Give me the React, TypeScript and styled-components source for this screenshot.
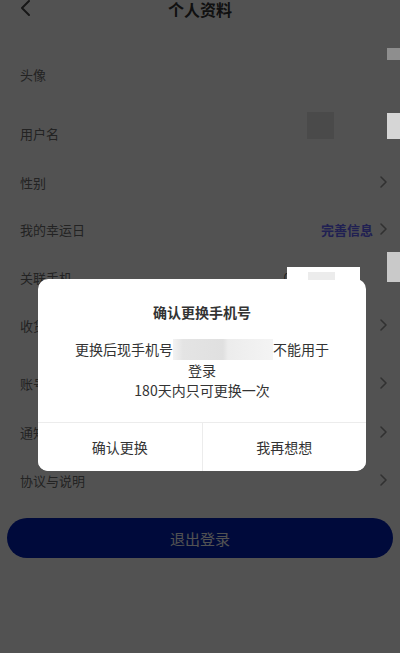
import React from "react";
import styled, { createGlobalStyle } from "styled-components";

const GlobalStyle = createGlobalStyle`
  html, body { margin: 0; padding: 0; background: #525252; }
  body { font-family: "Noto Sans CJK SC", "Noto Sans", sans-serif; }
  * { box-sizing: border-box; }
`;

const Screen = styled.div`
  position: relative;
  width: 400px;
  height: 653px;
  overflow: hidden;
`;

const Page = styled.div`
  display: flex;
  flex-direction: column;
  background: #ffffff;
  height: 653px;
`;

const Header = styled.div`
  position: relative;
  height: 18px;
  display: flex;
  align-items: center;
  justify-content: center;
`;

const BackButton = styled.div`
  position: absolute;
  left: 20px;
  top: 0;
  width: 12px;
  height: 16px;
  display: flex;
  align-items: center;
`;

const Title = styled.div`
  font-size: 16px;
  line-height: 18px;
  font-weight: 700;
  color: #333333;
`;

const List = styled.div`
  display: flex;
  flex-direction: column;
  margin-top: 22px;
`;

const Group = styled.div<{ $gap?: number }>`
  display: flex;
  flex-direction: column;
  margin-top: ${(p) => p.$gap ?? 0}px;
`;

const Row = styled.div<{ $h: number }>`
  height: ${(p) => p.$h}px;
  display: flex;
  align-items: center;
  justify-content: space-between;
  padding: 0 13px 0 20px;
`;

const Label = styled.span`
  font-size: 13px;
  color: #6c6c6c;
`;

const Right = styled.div`
  display: flex;
  align-items: center;
  gap: 7px;
`;

const LinkText = styled.span`
  font-size: 13px;
  font-weight: 700;
  color: #6464ff;
`;

const Value = styled.span`
  font-size: 13px;
  color: #6c6c6c;
  margin-right: 36px;
`;

const Logout = styled.button`
  margin: 14px 7px 0;
  height: 40px;
  border: none;
  border-radius: 20px;
  background: #001fb6;
  color: #ffffff;
  font-family: inherit;
  font-size: 15px;
  display: flex;
  align-items: center;
  justify-content: center;
`;

const Overlay = styled.div`
  position: absolute;
  inset: 0;
  background: rgba(0, 0, 0, 0.68);
  display: flex;
  justify-content: flex-start;
  align-items: flex-start;
  padding: 279px 0 0 38px;
`;

const Dialog = styled.div`
  width: 328px;
  background: #ffffff;
  border-radius: 10px;
  display: flex;
  flex-direction: column;
  overflow: hidden;
`;

const DialogTitle = styled.div`
  padding-top: 23px;
  font-size: 14px;
  line-height: 20px;
  font-weight: 700;
  color: #333333;
  text-align: center;
`;

const DialogBody = styled.div`
  margin-top: 17px;
  padding: 0 16px 22px;
  font-size: 14px;
  line-height: 20px;
  color: #333333;
  text-align: center;
`;

const Blurred = styled.span`
  display: inline-block;
  width: 100px;
  height: 21px;
  vertical-align: middle;
  margin-top: -3px;
  background: linear-gradient(
    90deg,
    #f2f2f2 0%,
    #e4e4e4 10%,
    #e0e0e0 50%,
    #ececec 55%,
    #f4f4f4 100%
  );
`;

const Actions = styled.div`
  display: flex;
  border-top: 1px solid #ececec;
`;

const Action = styled.button<{ $divider?: boolean }>`
  flex: 1;
  height: 48px;
  border: none;
  border-left: ${(p) => (p.$divider ? "1px solid #ececec" : "none")};
  background: #ffffff;
  font-family: inherit;
  font-size: 14px;
  color: #333333;
`;

const Mask = styled.div<{ $l: number; $t: number; $w: number; $h: number; $c: string }>`
  position: absolute;
  left: ${(p) => p.$l}px;
  top: ${(p) => p.$t}px;
  width: ${(p) => p.$w}px;
  height: ${(p) => p.$h}px;
  background: ${(p) => p.$c};
`;

const Chevron = () => (
  <svg width="7" height="12" viewBox="0 0 7 12">
    <polyline points="1,1 6,6 1,11" fill="none" stroke="#9a9a9a" strokeWidth="1.6" strokeLinecap="round" strokeLinejoin="round" />
  </svg>
);

const BackIcon = () => (
  <svg width="10" height="16" viewBox="0 0 10 16">
    <polyline points="9,1 2,8 9,15" fill="none" stroke="#4a4a4a" strokeWidth="2" strokeLinecap="round" strokeLinejoin="round" />
  </svg>
);

export default function App() {
  return (
    <>
      <GlobalStyle />
      <Screen>
        <Page>
          <Header>
            <BackButton>
              <BackIcon />
            </BackButton>
            <Title>个人资料</Title>
          </Header>
          <List>
            <Group>
              <Row $h={68}>
                <Label>头像</Label>
              </Row>
              <Row $h={50}>
                <Label>用户名</Label>
              </Row>
              <Row $h={48}>
                <Label>性别</Label>
                <Chevron />
              </Row>
              <Row $h={46}>
                <Label>我的幸运日</Label>
                <Right>
                  <LinkText>完善信息</LinkText>
                  <Chevron />
                </Right>
              </Row>
              <Row $h={50}>
                <Label>关联手机</Label>
                <Right>
                  <Value>0612****89</Value>
                </Right>
              </Row>
              <Row $h={46}>
                <Label>收货地址</Label>
                <Chevron />
              </Row>
            </Group>
            <Group $gap={10}>
              <Row $h={50}>
                <Label>账号与安全</Label>
                <Chevron />
              </Row>
              <Row $h={48}>
                <Label>通知设置</Label>
                <Chevron />
              </Row>
              <Row $h={48}>
                <Label>协议与说明</Label>
                <Chevron />
              </Row>
            </Group>
          </List>
          <Logout>退出登录</Logout>
        </Page>
        <Overlay>
          <Dialog>
            <DialogTitle>确认更换手机号</DialogTitle>
            <DialogBody>
              更换后现手机号<Blurred />不能用于
              <br />
              登录
              <br />
              180天内只可更换一次
            </DialogBody>
            <Actions>
              <Action>确认更换</Action>
              <Action $divider>我再想想</Action>
            </Actions>
          </Dialog>
        </Overlay>
        <Mask $l={387} $t={48} $w={13} $h={12} $c="#8e8e8e" />
        <Mask $l={307} $t={112} $w={27} $h={27} $c="#4a4a4a" />
        <Mask $l={387} $t={113} $w={13} $h={26} $c="#d6d6d6" />
        <Mask $l={287} $t={267} $w={73} $h={13} $c="#ffffff" />
        <Mask $l={308} $t={272} $w={27} $h={8} $c="#ececec" />
        <Mask $l={387} $t={252} $w={13} $h={30} $c="#c9c9c9" />
      </Screen>
    </>
  );
}
